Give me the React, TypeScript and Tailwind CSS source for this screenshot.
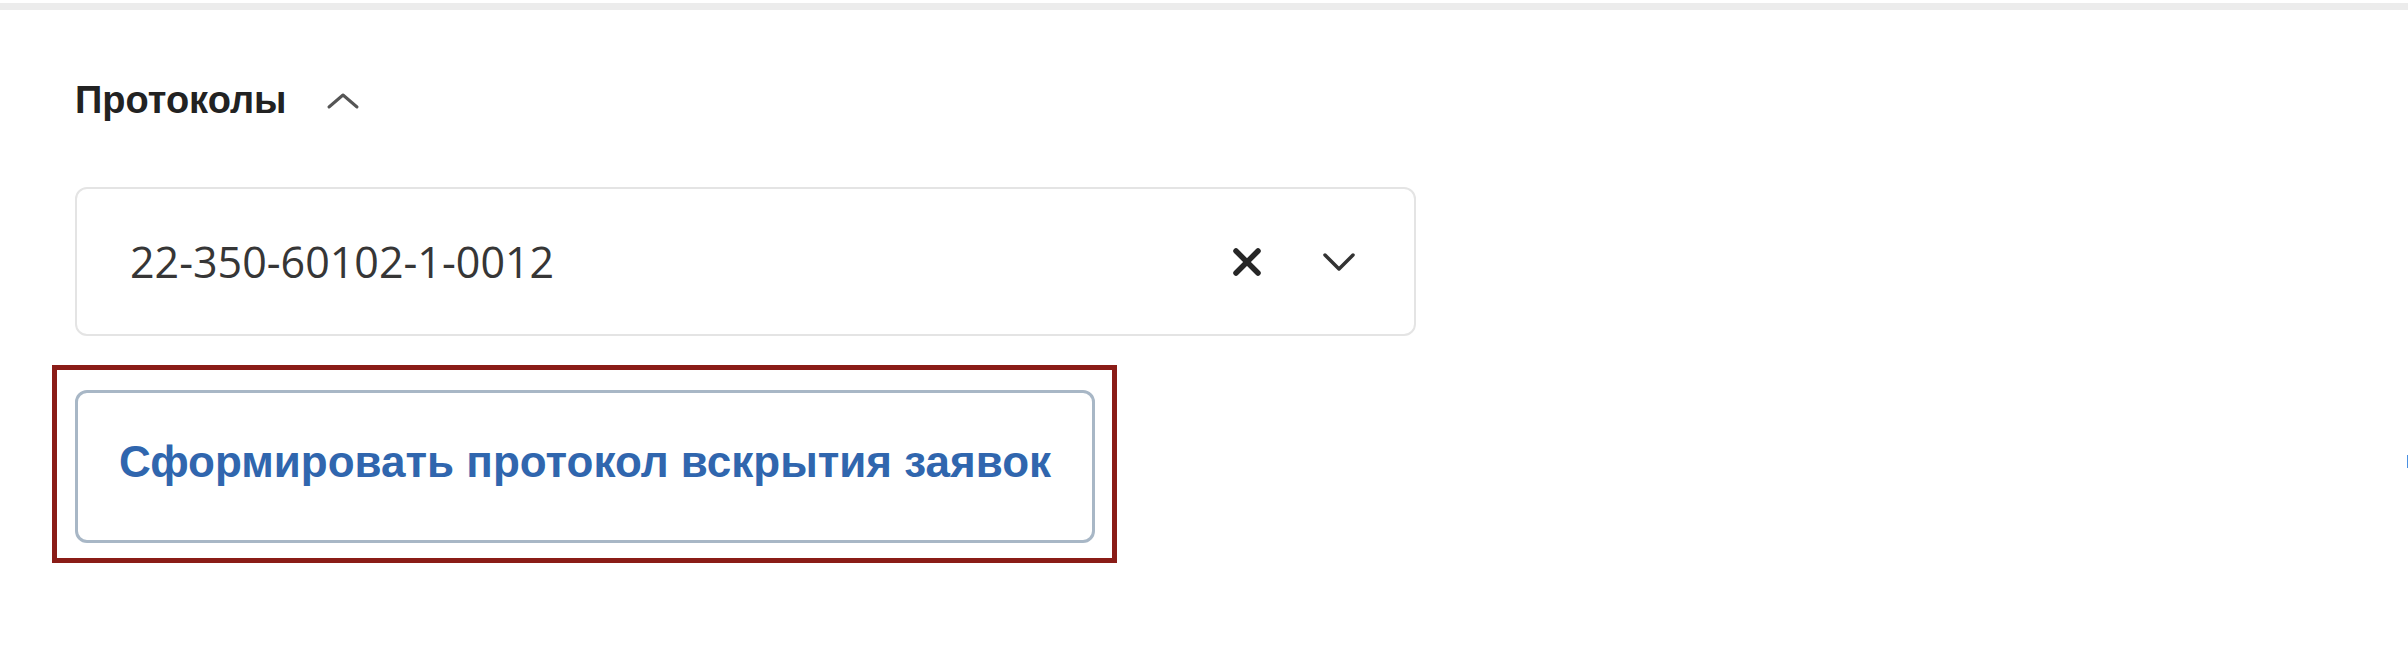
import React, { useState } from 'react';

const ChevronUp: React.FC<{ className?: string }> = ({ className }) => (
  <svg className={className} width="34" height="18" viewBox="0 0 34 18" fill="none">
    <polyline points="3,15 17,3 31,15" stroke="currentColor" strokeWidth="3" strokeLinecap="round" strokeLinejoin="round" />
  </svg>
);

const ChevronDown: React.FC<{ className?: string }> = ({ className }) => (
  <svg className={className} width="34" height="20" viewBox="0 0 34 20" fill="none">
    <polyline points="3,3 17,17 31,3" stroke="currentColor" strokeWidth="3.5" strokeLinecap="round" strokeLinejoin="round" />
  </svg>
);

const CloseIcon: React.FC<{ className?: string }> = ({ className }) => (
  <svg className={className} width="30" height="30" viewBox="0 0 30 30" fill="none">
    <path d="M4 4 L26 26 M26 4 L4 26" stroke="currentColor" strokeWidth="5.5" strokeLinecap="round" />
  </svg>
);

const App: React.FC = () => {
  const [open, setOpen] = useState<boolean>(true);
  const [protocol, setProtocol] = useState<string>('22-350-60102-1-0012');

  return (
    <div className="relative min-h-screen bg-white font-['Liberation_Sans',Arial,sans-serif]">
      <div className="mt-[3px] h-[7px] bg-[#ececec]" />

      <div className="pl-[75px] pt-[71px]">
        {/* section header */}
        <button
          onClick={() => setOpen(!open)}
          className="flex items-center gap-[39px] h-[38px]"
        >
          <span className="text-[38px] leading-none font-bold text-[#222222]">Протоколы</span>
          <ChevronUp className="text-[#555555] mt-[1px]" />
        </button>

        {open && (
          <>
            <div className="mt-[68px] w-[1341px] h-[149px] flex items-center border-2 border-[#e4e4e4] rounded-[12px] pl-[53px] pr-[58px]">
              <span className="flex-1 font-['Open_Sans',sans-serif] text-[43px] leading-none text-[#363636]">
                {protocol}
              </span>
              <button onClick={() => setProtocol('')} className="text-[#262626]">
                <CloseIcon />
              </button>
              <ChevronDown className="ml-[60px] text-[#333333]" />
            </div>

            <div className="mt-[29px] -ml-[23px] w-[1065px] h-[198px] border-[5px] border-[#8a1c17] pl-[18px] pt-[20px]">
              <button className="w-[1020px] h-[153px] border-[3px] border-[#a8b7c6] rounded-[12px] bg-white flex items-center justify-center pb-[10px]">
                <span className="text-[44px] leading-none font-bold text-[#3066ae]">
                  Сформировать протокол вскрытия заявок
                </span>
              </button>
            </div>
          </>
        )}
      </div>

      <div className="absolute right-0 top-[452px] w-[1px] h-[13px] bg-[#4a90e2]" />
    </div>
  );
};

export default App;
